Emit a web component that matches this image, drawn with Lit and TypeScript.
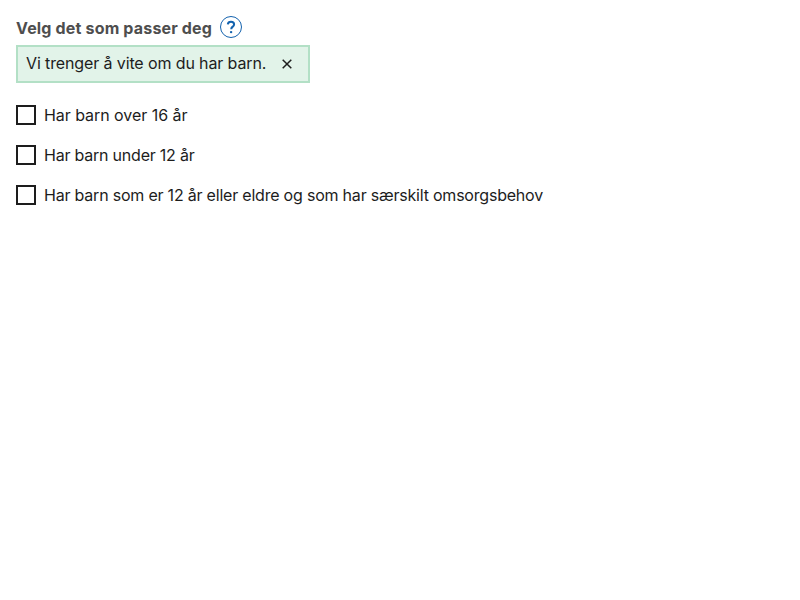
import { LitElement, html, css } from "lit";
import { customElement } from "lit/decorators.js";

const options = [
  { text: "Har barn over 16 år", tracking: "-0.05px" },
  { text: "Har barn under 12 år", tracking: "-0.22px" },
  { text: "Har barn som er 12 år eller eldre og som har særskilt omsorgsbehov", tracking: "-0.21px" },
];

@customElement("app-root")
export class AppRoot extends LitElement {
  static styles = css`
    :host {
      display: block;
      padding: 16px;
      font-family: Inter, "Liberation Sans", sans-serif;
      font-size: 16px;
      line-height: 22px;
      color: #1d1d1d;
    }
    .legend {
      display: flex;
      align-items: center;
      gap: 8px;
      height: 22px;
      font-weight: 700;
      color: #4e4e4e;
    }
    .legend-text {
      width: 196px;
      padding-top: 2px;
      letter-spacing: 0.17px;
      white-space: nowrap;
    }
    .help-button {
      display: flex;
      padding: 0;
      border: 0;
      background: none;
    }
    .message {
      display: flex;
      width: 294px;
      box-sizing: border-box;
      height: 38px;
      align-items: center;
      justify-content: space-between;
      margin-top: 7px;
      padding: 0 16px 0 8px;
      border: 2px solid #b3e0c6;
      background: #e2f3e9;
    }
    .message-text {
      padding-bottom: 2px;
      letter-spacing: -0.12px;
      white-space: nowrap;
    }
    .close {
      display: flex;
      margin: 0;
      padding: 0;
      border: 0;
      background: none;
    }
    .options {
      display: flex;
      flex-direction: column;
      gap: 20px;
      margin-top: 22px;
    }
    .option {
      display: flex;
      align-items: center;
      gap: 8px;
      height: 20px;
    }
    .box {
      appearance: none;
      box-sizing: border-box;
      width: 20px;
      height: 20px;
      margin: 0;
      border: 2px solid #1d1d1d;
      background: #fff;
    }
  `;

  render() {
    return html`
      <div class="legend">
        <span class="legend-text">Velg det som passer deg</span>
        <button class="help-button" aria-label="Hjelp">
          <svg width="22" height="22" viewBox="0 0 22 22" fill="none" stroke="#1362ae">
            <circle cx="11" cy="11" r="10.5" />
            <path d="M7.8 8.4C8 6.6 9.2 5.8 11 5.8s3.1 1 3.1 2.6c0 2.2-2.9 2.3-2.9 4.8" stroke-width="2" />
            <circle cx="11.1" cy="16.1" r="1.2" fill="#1362ae" stroke="none" />
          </svg>
        </button>
      </div>
      <div class="message">
        <span class="message-text">Vi trenger å vite om du har barn.</span>
        <button class="close" aria-label="Lukk">
          <svg width="10" height="10" viewBox="0 0 10 10" fill="none" stroke="#1d1d1d" stroke-width="1.5">
            <path d="M.7.7l8.6 8.6M9.3.7L.7 9.3" />
          </svg>
        </button>
      </div>
      <div class="options">
        ${options.map(
          (o) => html`<label class="option">
            <input class="box" type="checkbox" />
            <span style="letter-spacing: ${o.tracking}">${o.text}</span>
          </label>`
        )}
      </div>
    `;
  }
}
